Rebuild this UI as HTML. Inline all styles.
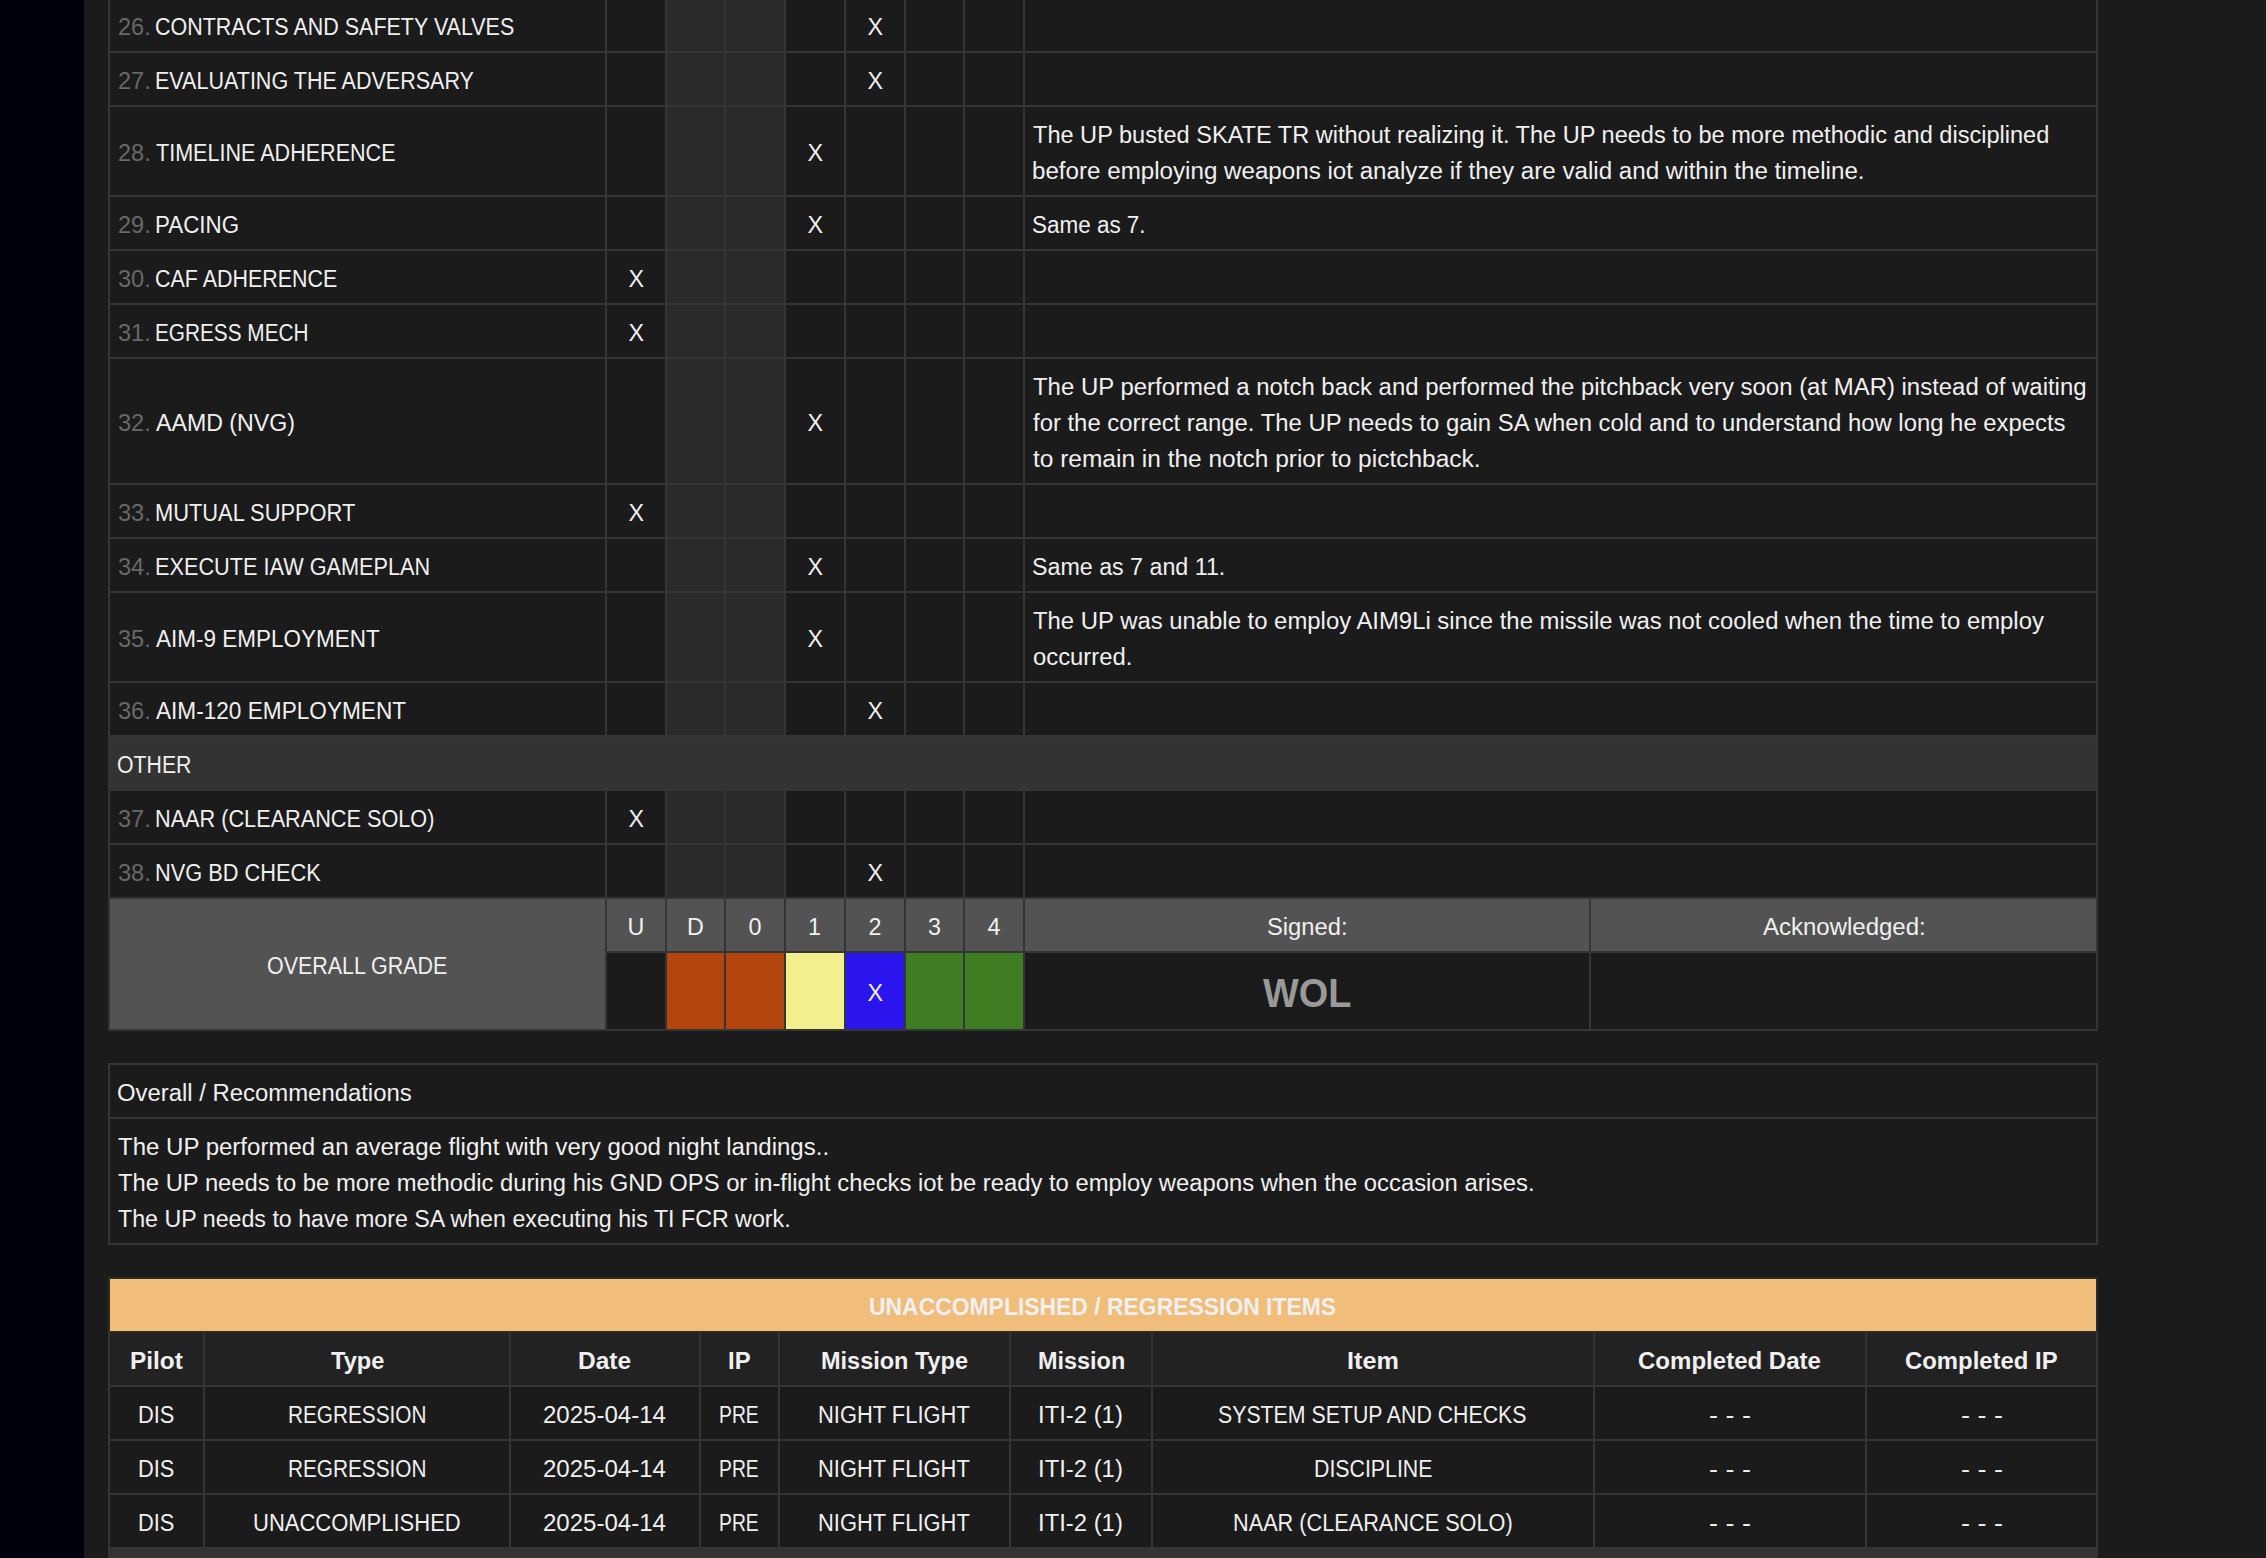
<!DOCTYPE html>
<html><head><meta charset="utf-8"><title>Grade Sheet</title>
<style>
html,body{margin:0;padding:0;}
body{width:2266px;height:1558px;overflow:hidden;position:relative;background:#1b1b1b;font-family:'Liberation Sans', sans-serif;font-size:23.3px;color:#f0f0f0;}
.r{position:absolute;}
.t{position:absolute;line-height:0;white-space:nowrap;transform-origin:0 0;}
</style></head><body>
<div class="r" style="left:0px;top:0px;width:84px;height:1558px;background:#00000c"></div>
<div class="r" style="left:108px;top:-3px;width:1990px;height:1034px;background:#353535"></div>
<div class="r" style="left:110px;top:-1px;width:495px;height:52px;background:#1b1b1b"></div>
<div class="r" style="left:607px;top:-1px;width:58px;height:52px;background:#1b1b1b"></div>
<div class="r" style="left:667px;top:-1px;width:57px;height:52px;background:#2a2a2a"></div>
<div class="r" style="left:726px;top:-1px;width:58px;height:52px;background:#2a2a2a"></div>
<div class="r" style="left:786px;top:-1px;width:58px;height:52px;background:#1b1b1b"></div>
<div class="r" style="left:846px;top:-1px;width:58px;height:52px;background:#1b1b1b"></div>
<div class="r" style="left:906px;top:-1px;width:57px;height:52px;background:#1b1b1b"></div>
<div class="r" style="left:965px;top:-1px;width:58px;height:52px;background:#1b1b1b"></div>
<div class="r" style="left:1025px;top:-1px;width:1071px;height:52px;background:#1b1b1b"></div>
<div class="r" style="left:110px;top:53px;width:495px;height:52px;background:#1b1b1b"></div>
<div class="r" style="left:607px;top:53px;width:58px;height:52px;background:#1b1b1b"></div>
<div class="r" style="left:667px;top:53px;width:57px;height:52px;background:#2a2a2a"></div>
<div class="r" style="left:726px;top:53px;width:58px;height:52px;background:#2a2a2a"></div>
<div class="r" style="left:786px;top:53px;width:58px;height:52px;background:#1b1b1b"></div>
<div class="r" style="left:846px;top:53px;width:58px;height:52px;background:#1b1b1b"></div>
<div class="r" style="left:906px;top:53px;width:57px;height:52px;background:#1b1b1b"></div>
<div class="r" style="left:965px;top:53px;width:58px;height:52px;background:#1b1b1b"></div>
<div class="r" style="left:1025px;top:53px;width:1071px;height:52px;background:#1b1b1b"></div>
<div class="r" style="left:110px;top:107px;width:495px;height:88px;background:#1b1b1b"></div>
<div class="r" style="left:607px;top:107px;width:58px;height:88px;background:#1b1b1b"></div>
<div class="r" style="left:667px;top:107px;width:57px;height:88px;background:#2a2a2a"></div>
<div class="r" style="left:726px;top:107px;width:58px;height:88px;background:#2a2a2a"></div>
<div class="r" style="left:786px;top:107px;width:58px;height:88px;background:#1b1b1b"></div>
<div class="r" style="left:846px;top:107px;width:58px;height:88px;background:#1b1b1b"></div>
<div class="r" style="left:906px;top:107px;width:57px;height:88px;background:#1b1b1b"></div>
<div class="r" style="left:965px;top:107px;width:58px;height:88px;background:#1b1b1b"></div>
<div class="r" style="left:1025px;top:107px;width:1071px;height:88px;background:#1b1b1b"></div>
<div class="r" style="left:110px;top:197px;width:495px;height:52px;background:#1b1b1b"></div>
<div class="r" style="left:607px;top:197px;width:58px;height:52px;background:#1b1b1b"></div>
<div class="r" style="left:667px;top:197px;width:57px;height:52px;background:#2a2a2a"></div>
<div class="r" style="left:726px;top:197px;width:58px;height:52px;background:#2a2a2a"></div>
<div class="r" style="left:786px;top:197px;width:58px;height:52px;background:#1b1b1b"></div>
<div class="r" style="left:846px;top:197px;width:58px;height:52px;background:#1b1b1b"></div>
<div class="r" style="left:906px;top:197px;width:57px;height:52px;background:#1b1b1b"></div>
<div class="r" style="left:965px;top:197px;width:58px;height:52px;background:#1b1b1b"></div>
<div class="r" style="left:1025px;top:197px;width:1071px;height:52px;background:#1b1b1b"></div>
<div class="r" style="left:110px;top:251px;width:495px;height:52px;background:#1b1b1b"></div>
<div class="r" style="left:607px;top:251px;width:58px;height:52px;background:#1b1b1b"></div>
<div class="r" style="left:667px;top:251px;width:57px;height:52px;background:#2a2a2a"></div>
<div class="r" style="left:726px;top:251px;width:58px;height:52px;background:#2a2a2a"></div>
<div class="r" style="left:786px;top:251px;width:58px;height:52px;background:#1b1b1b"></div>
<div class="r" style="left:846px;top:251px;width:58px;height:52px;background:#1b1b1b"></div>
<div class="r" style="left:906px;top:251px;width:57px;height:52px;background:#1b1b1b"></div>
<div class="r" style="left:965px;top:251px;width:58px;height:52px;background:#1b1b1b"></div>
<div class="r" style="left:1025px;top:251px;width:1071px;height:52px;background:#1b1b1b"></div>
<div class="r" style="left:110px;top:305px;width:495px;height:52px;background:#1b1b1b"></div>
<div class="r" style="left:607px;top:305px;width:58px;height:52px;background:#1b1b1b"></div>
<div class="r" style="left:667px;top:305px;width:57px;height:52px;background:#2a2a2a"></div>
<div class="r" style="left:726px;top:305px;width:58px;height:52px;background:#2a2a2a"></div>
<div class="r" style="left:786px;top:305px;width:58px;height:52px;background:#1b1b1b"></div>
<div class="r" style="left:846px;top:305px;width:58px;height:52px;background:#1b1b1b"></div>
<div class="r" style="left:906px;top:305px;width:57px;height:52px;background:#1b1b1b"></div>
<div class="r" style="left:965px;top:305px;width:58px;height:52px;background:#1b1b1b"></div>
<div class="r" style="left:1025px;top:305px;width:1071px;height:52px;background:#1b1b1b"></div>
<div class="r" style="left:110px;top:359px;width:495px;height:124px;background:#1b1b1b"></div>
<div class="r" style="left:607px;top:359px;width:58px;height:124px;background:#1b1b1b"></div>
<div class="r" style="left:667px;top:359px;width:57px;height:124px;background:#2a2a2a"></div>
<div class="r" style="left:726px;top:359px;width:58px;height:124px;background:#2a2a2a"></div>
<div class="r" style="left:786px;top:359px;width:58px;height:124px;background:#1b1b1b"></div>
<div class="r" style="left:846px;top:359px;width:58px;height:124px;background:#1b1b1b"></div>
<div class="r" style="left:906px;top:359px;width:57px;height:124px;background:#1b1b1b"></div>
<div class="r" style="left:965px;top:359px;width:58px;height:124px;background:#1b1b1b"></div>
<div class="r" style="left:1025px;top:359px;width:1071px;height:124px;background:#1b1b1b"></div>
<div class="r" style="left:110px;top:485px;width:495px;height:52px;background:#1b1b1b"></div>
<div class="r" style="left:607px;top:485px;width:58px;height:52px;background:#1b1b1b"></div>
<div class="r" style="left:667px;top:485px;width:57px;height:52px;background:#2a2a2a"></div>
<div class="r" style="left:726px;top:485px;width:58px;height:52px;background:#2a2a2a"></div>
<div class="r" style="left:786px;top:485px;width:58px;height:52px;background:#1b1b1b"></div>
<div class="r" style="left:846px;top:485px;width:58px;height:52px;background:#1b1b1b"></div>
<div class="r" style="left:906px;top:485px;width:57px;height:52px;background:#1b1b1b"></div>
<div class="r" style="left:965px;top:485px;width:58px;height:52px;background:#1b1b1b"></div>
<div class="r" style="left:1025px;top:485px;width:1071px;height:52px;background:#1b1b1b"></div>
<div class="r" style="left:110px;top:539px;width:495px;height:52px;background:#1b1b1b"></div>
<div class="r" style="left:607px;top:539px;width:58px;height:52px;background:#1b1b1b"></div>
<div class="r" style="left:667px;top:539px;width:57px;height:52px;background:#2a2a2a"></div>
<div class="r" style="left:726px;top:539px;width:58px;height:52px;background:#2a2a2a"></div>
<div class="r" style="left:786px;top:539px;width:58px;height:52px;background:#1b1b1b"></div>
<div class="r" style="left:846px;top:539px;width:58px;height:52px;background:#1b1b1b"></div>
<div class="r" style="left:906px;top:539px;width:57px;height:52px;background:#1b1b1b"></div>
<div class="r" style="left:965px;top:539px;width:58px;height:52px;background:#1b1b1b"></div>
<div class="r" style="left:1025px;top:539px;width:1071px;height:52px;background:#1b1b1b"></div>
<div class="r" style="left:110px;top:593px;width:495px;height:88px;background:#1b1b1b"></div>
<div class="r" style="left:607px;top:593px;width:58px;height:88px;background:#1b1b1b"></div>
<div class="r" style="left:667px;top:593px;width:57px;height:88px;background:#2a2a2a"></div>
<div class="r" style="left:726px;top:593px;width:58px;height:88px;background:#2a2a2a"></div>
<div class="r" style="left:786px;top:593px;width:58px;height:88px;background:#1b1b1b"></div>
<div class="r" style="left:846px;top:593px;width:58px;height:88px;background:#1b1b1b"></div>
<div class="r" style="left:906px;top:593px;width:57px;height:88px;background:#1b1b1b"></div>
<div class="r" style="left:965px;top:593px;width:58px;height:88px;background:#1b1b1b"></div>
<div class="r" style="left:1025px;top:593px;width:1071px;height:88px;background:#1b1b1b"></div>
<div class="r" style="left:110px;top:683px;width:495px;height:52px;background:#1b1b1b"></div>
<div class="r" style="left:607px;top:683px;width:58px;height:52px;background:#1b1b1b"></div>
<div class="r" style="left:667px;top:683px;width:57px;height:52px;background:#2a2a2a"></div>
<div class="r" style="left:726px;top:683px;width:58px;height:52px;background:#2a2a2a"></div>
<div class="r" style="left:786px;top:683px;width:58px;height:52px;background:#1b1b1b"></div>
<div class="r" style="left:846px;top:683px;width:58px;height:52px;background:#1b1b1b"></div>
<div class="r" style="left:906px;top:683px;width:57px;height:52px;background:#1b1b1b"></div>
<div class="r" style="left:965px;top:683px;width:58px;height:52px;background:#1b1b1b"></div>
<div class="r" style="left:1025px;top:683px;width:1071px;height:52px;background:#1b1b1b"></div>
<div class="r" style="left:110px;top:737px;width:1986px;height:52px;background:#333333"></div>
<div class="r" style="left:110px;top:791px;width:495px;height:52px;background:#1b1b1b"></div>
<div class="r" style="left:607px;top:791px;width:58px;height:52px;background:#1b1b1b"></div>
<div class="r" style="left:667px;top:791px;width:57px;height:52px;background:#2a2a2a"></div>
<div class="r" style="left:726px;top:791px;width:58px;height:52px;background:#2a2a2a"></div>
<div class="r" style="left:786px;top:791px;width:58px;height:52px;background:#1b1b1b"></div>
<div class="r" style="left:846px;top:791px;width:58px;height:52px;background:#1b1b1b"></div>
<div class="r" style="left:906px;top:791px;width:57px;height:52px;background:#1b1b1b"></div>
<div class="r" style="left:965px;top:791px;width:58px;height:52px;background:#1b1b1b"></div>
<div class="r" style="left:1025px;top:791px;width:1071px;height:52px;background:#1b1b1b"></div>
<div class="r" style="left:110px;top:845px;width:495px;height:52px;background:#1b1b1b"></div>
<div class="r" style="left:607px;top:845px;width:58px;height:52px;background:#1b1b1b"></div>
<div class="r" style="left:667px;top:845px;width:57px;height:52px;background:#2a2a2a"></div>
<div class="r" style="left:726px;top:845px;width:58px;height:52px;background:#2a2a2a"></div>
<div class="r" style="left:786px;top:845px;width:58px;height:52px;background:#1b1b1b"></div>
<div class="r" style="left:846px;top:845px;width:58px;height:52px;background:#1b1b1b"></div>
<div class="r" style="left:906px;top:845px;width:57px;height:52px;background:#1b1b1b"></div>
<div class="r" style="left:965px;top:845px;width:58px;height:52px;background:#1b1b1b"></div>
<div class="r" style="left:1025px;top:845px;width:1071px;height:52px;background:#1b1b1b"></div>
<div class="r" style="left:110px;top:899px;width:495px;height:130px;background:#535353"></div>
<div class="r" style="left:607px;top:899px;width:58px;height:52px;background:#535353"></div>
<div class="r" style="left:607px;top:953px;width:58px;height:76px;background:#1b1b1b"></div>
<div class="r" style="left:667px;top:899px;width:57px;height:52px;background:#535353"></div>
<div class="r" style="left:667px;top:953px;width:57px;height:76px;background:#b5450f"></div>
<div class="r" style="left:726px;top:899px;width:58px;height:52px;background:#535353"></div>
<div class="r" style="left:726px;top:953px;width:58px;height:76px;background:#b5450f"></div>
<div class="r" style="left:786px;top:899px;width:58px;height:52px;background:#535353"></div>
<div class="r" style="left:786px;top:953px;width:58px;height:76px;background:#f2f08e"></div>
<div class="r" style="left:846px;top:899px;width:58px;height:52px;background:#535353"></div>
<div class="r" style="left:846px;top:953px;width:58px;height:76px;background:#2b15ee"></div>
<div class="r" style="left:906px;top:899px;width:57px;height:52px;background:#535353"></div>
<div class="r" style="left:906px;top:953px;width:57px;height:76px;background:#3f7d22"></div>
<div class="r" style="left:965px;top:899px;width:58px;height:52px;background:#535353"></div>
<div class="r" style="left:965px;top:953px;width:58px;height:76px;background:#3f7d22"></div>
<div class="r" style="left:1025px;top:899px;width:564px;height:52px;background:#535353"></div>
<div class="r" style="left:1591px;top:899px;width:505px;height:52px;background:#535353"></div>
<div class="r" style="left:1025px;top:953px;width:564px;height:76px;background:#1b1b1b"></div>
<div class="r" style="left:1591px;top:953px;width:505px;height:76px;background:#1b1b1b"></div>
<div class="r" style="left:108px;top:1063px;width:1990px;height:182px;background:#353535"></div>
<div class="r" style="left:110px;top:1065px;width:1986px;height:52px;background:#1b1b1b"></div>
<div class="r" style="left:110px;top:1119px;width:1986px;height:124px;background:#1b1b1b"></div>
<div class="r" style="left:108px;top:1277px;width:1990px;height:281px;background:#353535"></div>
<div class="r" style="left:108px;top:1277px;width:1990px;height:56px;background:#2e2c27"></div>
<div class="r" style="left:110px;top:1279px;width:1986px;height:52px;background:#f0bd7b"></div>
<div class="r" style="left:110px;top:1333px;width:93px;height:52px;background:#222222"></div>
<div class="r" style="left:205px;top:1333px;width:304px;height:52px;background:#222222"></div>
<div class="r" style="left:511px;top:1333px;width:188px;height:52px;background:#222222"></div>
<div class="r" style="left:701px;top:1333px;width:77px;height:52px;background:#222222"></div>
<div class="r" style="left:780px;top:1333px;width:229px;height:52px;background:#222222"></div>
<div class="r" style="left:1011px;top:1333px;width:140px;height:52px;background:#222222"></div>
<div class="r" style="left:1153px;top:1333px;width:440px;height:52px;background:#222222"></div>
<div class="r" style="left:1595px;top:1333px;width:270px;height:52px;background:#222222"></div>
<div class="r" style="left:1867px;top:1333px;width:229px;height:52px;background:#222222"></div>
<div class="r" style="left:110px;top:1387px;width:93px;height:52px;background:#1b1b1b"></div>
<div class="r" style="left:205px;top:1387px;width:304px;height:52px;background:#1b1b1b"></div>
<div class="r" style="left:511px;top:1387px;width:188px;height:52px;background:#1b1b1b"></div>
<div class="r" style="left:701px;top:1387px;width:77px;height:52px;background:#1b1b1b"></div>
<div class="r" style="left:780px;top:1387px;width:229px;height:52px;background:#1b1b1b"></div>
<div class="r" style="left:1011px;top:1387px;width:140px;height:52px;background:#1b1b1b"></div>
<div class="r" style="left:1153px;top:1387px;width:440px;height:52px;background:#1b1b1b"></div>
<div class="r" style="left:1595px;top:1387px;width:270px;height:52px;background:#1b1b1b"></div>
<div class="r" style="left:1867px;top:1387px;width:229px;height:52px;background:#1b1b1b"></div>
<div class="r" style="left:110px;top:1441px;width:93px;height:52px;background:#1b1b1b"></div>
<div class="r" style="left:205px;top:1441px;width:304px;height:52px;background:#1b1b1b"></div>
<div class="r" style="left:511px;top:1441px;width:188px;height:52px;background:#1b1b1b"></div>
<div class="r" style="left:701px;top:1441px;width:77px;height:52px;background:#1b1b1b"></div>
<div class="r" style="left:780px;top:1441px;width:229px;height:52px;background:#1b1b1b"></div>
<div class="r" style="left:1011px;top:1441px;width:140px;height:52px;background:#1b1b1b"></div>
<div class="r" style="left:1153px;top:1441px;width:440px;height:52px;background:#1b1b1b"></div>
<div class="r" style="left:1595px;top:1441px;width:270px;height:52px;background:#1b1b1b"></div>
<div class="r" style="left:1867px;top:1441px;width:229px;height:52px;background:#1b1b1b"></div>
<div class="r" style="left:110px;top:1495px;width:93px;height:52px;background:#1b1b1b"></div>
<div class="r" style="left:205px;top:1495px;width:304px;height:52px;background:#1b1b1b"></div>
<div class="r" style="left:511px;top:1495px;width:188px;height:52px;background:#1b1b1b"></div>
<div class="r" style="left:701px;top:1495px;width:77px;height:52px;background:#1b1b1b"></div>
<div class="r" style="left:780px;top:1495px;width:229px;height:52px;background:#1b1b1b"></div>
<div class="r" style="left:1011px;top:1495px;width:140px;height:52px;background:#1b1b1b"></div>
<div class="r" style="left:1153px;top:1495px;width:440px;height:52px;background:#1b1b1b"></div>
<div class="r" style="left:1595px;top:1495px;width:270px;height:52px;background:#1b1b1b"></div>
<div class="r" style="left:1867px;top:1495px;width:229px;height:52px;background:#1b1b1b"></div>
<div class="r" style="left:110px;top:1549px;width:1986px;height:9px;background:#333333"></div>
<div class="t" id="t0" style="left:117.97px;top:26.93px;color:#686868;transform:scaleX(1.0105);">26.</div>
<div class="t" id="t1" style="left:154.87px;top:26.93px;transform:scaleX(0.9220);">CONTRACTS AND SAFETY VALVES</div>
<div class="t" id="t2" style="left:867.50px;top:26.93px;">X</div>
<div class="t" id="t3" style="left:117.97px;top:80.93px;color:#686868;transform:scaleX(1.0105);">27.</div>
<div class="t" id="t4" style="left:154.87px;top:80.93px;transform:scaleX(0.9238);">EVALUATING THE ADVERSARY</div>
<div class="t" id="t5" style="left:867.50px;top:80.93px;">X</div>
<div class="t" id="t6" style="left:117.97px;top:152.93px;color:#686868;transform:scaleX(1.0105);">28.</div>
<div class="t" id="t7" style="left:155.80px;top:152.93px;transform:scaleX(0.9251);">TIMELINE ADHERENCE</div>
<div class="t" id="t8" style="left:807.50px;top:152.93px;">X</div>
<div class="t" id="t9" style="left:1033.00px;top:134.93px;transform:scaleX(1.0109);">The UP busted SKATE TR without realizing it. The UP needs to be more methodic and disciplined</div>
<div class="t" id="t10" style="left:1031.96px;top:170.93px;transform:scaleX(1.0369);">before employing weapons iot analyze if they are valid and within the timeline.</div>
<div class="t" id="t11" style="left:117.97px;top:224.93px;color:#686868;transform:scaleX(1.0105);">29.</div>
<div class="t" id="t12" style="left:154.84px;top:224.93px;transform:scaleX(0.9595);">PACING</div>
<div class="t" id="t13" style="left:807.50px;top:224.93px;">X</div>
<div class="t" id="t14" style="left:1032.04px;top:224.93px;transform:scaleX(0.9639);">Same as 7.</div>
<div class="t" id="t15" style="left:117.91px;top:278.93px;color:#686868;transform:scaleX(1.0127);">30.</div>
<div class="t" id="t16" style="left:154.87px;top:278.93px;transform:scaleX(0.9201);">CAF ADHERENCE</div>
<div class="t" id="t17" style="left:628.50px;top:278.93px;">X</div>
<div class="t" id="t18" style="left:117.91px;top:332.93px;color:#686868;transform:scaleX(1.0127);">31.</div>
<div class="t" id="t19" style="left:154.91px;top:332.93px;transform:scaleX(0.8917);">EGRESS MECH</div>
<div class="t" id="t20" style="left:628.50px;top:332.93px;">X</div>
<div class="t" id="t21" style="left:117.91px;top:422.93px;color:#686868;transform:scaleX(1.0127);">32.</div>
<div class="t" id="t22" style="left:155.80px;top:422.93px;transform:scaleX(0.9941);">AAMD (NVG)</div>
<div class="t" id="t23" style="left:807.50px;top:422.93px;">X</div>
<div class="t" id="t24" style="left:1033.00px;top:386.93px;transform:scaleX(1.0277);">The UP performed a notch back and performed the pitchback very soon (at MAR) instead of waiting</div>
<div class="t" id="t25" style="left:1033.00px;top:422.93px;transform:scaleX(1.0243);">for the correct range. The UP needs to gain SA when cold and to understand how long he expects</div>
<div class="t" id="t26" style="left:1033.00px;top:458.93px;transform:scaleX(1.0505);">to remain in the notch prior to pictchback.</div>
<div class="t" id="t27" style="left:117.91px;top:512.93px;color:#686868;transform:scaleX(1.0127);">33.</div>
<div class="t" id="t28" style="left:154.86px;top:512.93px;transform:scaleX(0.9380);">MUTUAL SUPPORT</div>
<div class="t" id="t29" style="left:628.50px;top:512.93px;">X</div>
<div class="t" id="t30" style="left:117.91px;top:566.93px;color:#686868;transform:scaleX(1.0127);">34.</div>
<div class="t" id="t31" style="left:154.87px;top:566.93px;transform:scaleX(0.9312);">EXECUTE IAW GAMEPLAN</div>
<div class="t" id="t32" style="left:807.50px;top:566.93px;">X</div>
<div class="t" id="t33" style="left:1032.00px;top:566.93px;transform:scaleX(0.9971);">Same as 7 and 11.</div>
<div class="t" id="t34" style="left:117.91px;top:638.93px;color:#686868;transform:scaleX(1.0127);">35.</div>
<div class="t" id="t35" style="left:155.80px;top:638.93px;transform:scaleX(0.9651);">AIM-9 EMPLOYMENT</div>
<div class="t" id="t36" style="left:807.50px;top:638.93px;">X</div>
<div class="t" id="t37" style="left:1033.00px;top:620.93px;transform:scaleX(1.0249);">The UP was unable to employ AIM9Li since the missile was not cooled when the time to employ</div>
<div class="t" id="t38" style="left:1033.00px;top:656.93px;transform:scaleX(1.0227);">occurred.</div>
<div class="t" id="t39" style="left:117.91px;top:710.93px;color:#686868;transform:scaleX(1.0127);">36.</div>
<div class="t" id="t40" style="left:155.80px;top:710.93px;transform:scaleX(0.9705);">AIM-120 EMPLOYMENT</div>
<div class="t" id="t41" style="left:867.50px;top:710.93px;">X</div>
<div class="t" id="t42" style="left:117.09px;top:764.93px;transform:scaleX(0.9133);">OTHER</div>
<div class="t" id="t43" style="left:117.91px;top:818.93px;color:#686868;transform:scaleX(1.0127);">37.</div>
<div class="t" id="t44" style="left:154.87px;top:818.93px;transform:scaleX(0.9304);">NAAR (CLEARANCE SOLO)</div>
<div class="t" id="t45" style="left:628.50px;top:818.93px;">X</div>
<div class="t" id="t46" style="left:117.91px;top:872.93px;color:#686868;transform:scaleX(1.0127);">38.</div>
<div class="t" id="t47" style="left:154.86px;top:872.93px;transform:scaleX(0.9344);">NVG BD CHECK</div>
<div class="t" id="t48" style="left:867.50px;top:872.93px;">X</div>
<div class="t" id="t49" style="left:267.08px;top:965.93px;transform:scaleX(0.9199);">OVERALL GRADE</div>
<div class="t" id="t50" style="left:627.50px;top:926.93px;">U</div>
<div class="t" id="t51" style="left:687.00px;top:926.93px;">D</div>
<div class="t" id="t52" style="left:748.50px;top:926.93px;">0</div>
<div class="t" id="t53" style="left:808.00px;top:926.93px;">1</div>
<div class="t" id="t54" style="left:868.50px;top:926.93px;">2</div>
<div class="t" id="t55" style="left:928.00px;top:926.93px;">3</div>
<div class="t" id="t56" style="left:987.50px;top:926.93px;">4</div>
<div class="t" id="t57" style="left:867.50px;top:992.93px;">X</div>
<div class="t" id="t58" style="left:1266.98px;top:926.93px;transform:scaleX(1.0191);">Signed:</div>
<div class="t" id="t59" style="left:1763.20px;top:926.93px;transform:scaleX(1.0299);">Acknowledged:</div>
<div class="t" id="t60" style="left:1263.00px;top:993.14px;font-size:40px;font-weight:bold;color:#999999;transform:scaleX(0.9477);">WOL</div>
<div class="t" id="t61" style="left:116.98px;top:1092.93px;transform:scaleX(1.0252);">Overall / Recommendations</div>
<div class="t" id="t62" style="left:118.00px;top:1146.93px;transform:scaleX(1.0308);">The UP performed an average flight with very good night landings..</div>
<div class="t" id="t63" style="left:118.00px;top:1182.93px;transform:scaleX(1.0217);">The UP needs to be more methodic during his GND OPS or in-flight checks iot be ready to employ weapons when the occasion arises.</div>
<div class="t" id="t64" style="left:118.00px;top:1218.93px;transform:scaleX(0.9963);">The UP needs to have more SA when executing his TI FCR work.</div>
<div class="t" id="t65" style="left:868.82px;top:1306.93px;font-weight:bold;transform:scaleX(0.9833);">UNACCOMPLISHED / REGRESSION ITEMS</div>
<div class="t" id="t66" style="left:129.95px;top:1360.93px;font-weight:bold;transform:scaleX(1.0460);">Pilot</div>
<div class="t" id="t67" style="left:330.80px;top:1360.93px;font-weight:bold;transform:scaleX(1.0137);">Type</div>
<div class="t" id="t68" style="left:577.95px;top:1360.93px;font-weight:bold;transform:scaleX(1.0497);">Date</div>
<div class="t" id="t69" style="left:727.97px;top:1360.93px;font-weight:bold;transform:scaleX(1.0258);">IP</div>
<div class="t" id="t70" style="left:820.99px;top:1360.93px;font-weight:bold;transform:scaleX(1.0077);">Mission Type</div>
<div class="t" id="t71" style="left:1037.99px;top:1360.93px;font-weight:bold;transform:scaleX(1.0060);">Mission</div>
<div class="t" id="t72" style="left:1346.92px;top:1360.93px;font-weight:bold;transform:scaleX(1.0825);">Item</div>
<div class="t" id="t73" style="left:1638.00px;top:1360.93px;font-weight:bold;transform:scaleX(1.0316);">Completed Date</div>
<div class="t" id="t74" style="left:1905.00px;top:1360.93px;font-weight:bold;transform:scaleX(1.0248);">Completed IP</div>
<div class="t" id="t75" style="left:138.06px;top:1414.93px;transform:scaleX(0.9384);">DIS</div>
<div class="t" id="t76" style="left:288.11px;top:1414.93px;transform:scaleX(0.8917);">REGRESSION</div>
<div class="t" id="t77" style="left:542.97px;top:1414.93px;transform:scaleX(1.0320);">2025-04-14</div>
<div class="t" id="t78" style="left:718.97px;top:1414.93px;transform:scaleX(0.8286);">PRE</div>
<div class="t" id="t79" style="left:818.30px;top:1414.93px;transform:scaleX(0.9405);">NIGHT FLIGHT</div>
<div class="t" id="t80" style="left:1038.19px;top:1414.93px;transform:scaleX(1.0241);">ITI-2 (1)</div>
<div class="t" id="t81" style="left:1218.27px;top:1414.93px;transform:scaleX(0.9141);">SYSTEM SETUP AND CHECKS</div>
<div class="t" id="t82" style="left:1708.84px;top:1414.93px;transform:scaleX(1.1607);">- - -</div>
<div class="t" id="t83" style="left:1960.84px;top:1414.93px;transform:scaleX(1.1607);">- - -</div>
<div class="t" id="t84" style="left:138.06px;top:1468.93px;transform:scaleX(0.9384);">DIS</div>
<div class="t" id="t85" style="left:288.11px;top:1468.93px;transform:scaleX(0.8917);">REGRESSION</div>
<div class="t" id="t86" style="left:542.97px;top:1468.93px;transform:scaleX(1.0320);">2025-04-14</div>
<div class="t" id="t87" style="left:718.97px;top:1468.93px;transform:scaleX(0.8286);">PRE</div>
<div class="t" id="t88" style="left:818.30px;top:1468.93px;transform:scaleX(0.9405);">NIGHT FLIGHT</div>
<div class="t" id="t89" style="left:1038.19px;top:1468.93px;transform:scaleX(1.0241);">ITI-2 (1)</div>
<div class="t" id="t90" style="left:1313.84px;top:1468.93px;transform:scaleX(0.9146);">DISCIPLINE</div>
<div class="t" id="t91" style="left:1708.84px;top:1468.93px;transform:scaleX(1.1607);">- - -</div>
<div class="t" id="t92" style="left:1960.84px;top:1468.93px;transform:scaleX(1.1607);">- - -</div>
<div class="t" id="t93" style="left:138.06px;top:1522.93px;transform:scaleX(0.9384);">DIS</div>
<div class="t" id="t94" style="left:253.06px;top:1522.93px;transform:scaleX(0.9439);">UNACCOMPLISHED</div>
<div class="t" id="t95" style="left:542.97px;top:1522.93px;transform:scaleX(1.0320);">2025-04-14</div>
<div class="t" id="t96" style="left:718.97px;top:1522.93px;transform:scaleX(0.8286);">PRE</div>
<div class="t" id="t97" style="left:818.30px;top:1522.93px;transform:scaleX(0.9405);">NIGHT FLIGHT</div>
<div class="t" id="t98" style="left:1038.19px;top:1522.93px;transform:scaleX(1.0241);">ITI-2 (1)</div>
<div class="t" id="t99" style="left:1233.07px;top:1522.93px;transform:scaleX(0.9311);">NAAR (CLEARANCE SOLO)</div>
<div class="t" id="t100" style="left:1708.84px;top:1522.93px;transform:scaleX(1.1607);">- - -</div>
<div class="t" id="t101" style="left:1960.84px;top:1522.93px;transform:scaleX(1.1607);">- - -</div>
</body></html>
